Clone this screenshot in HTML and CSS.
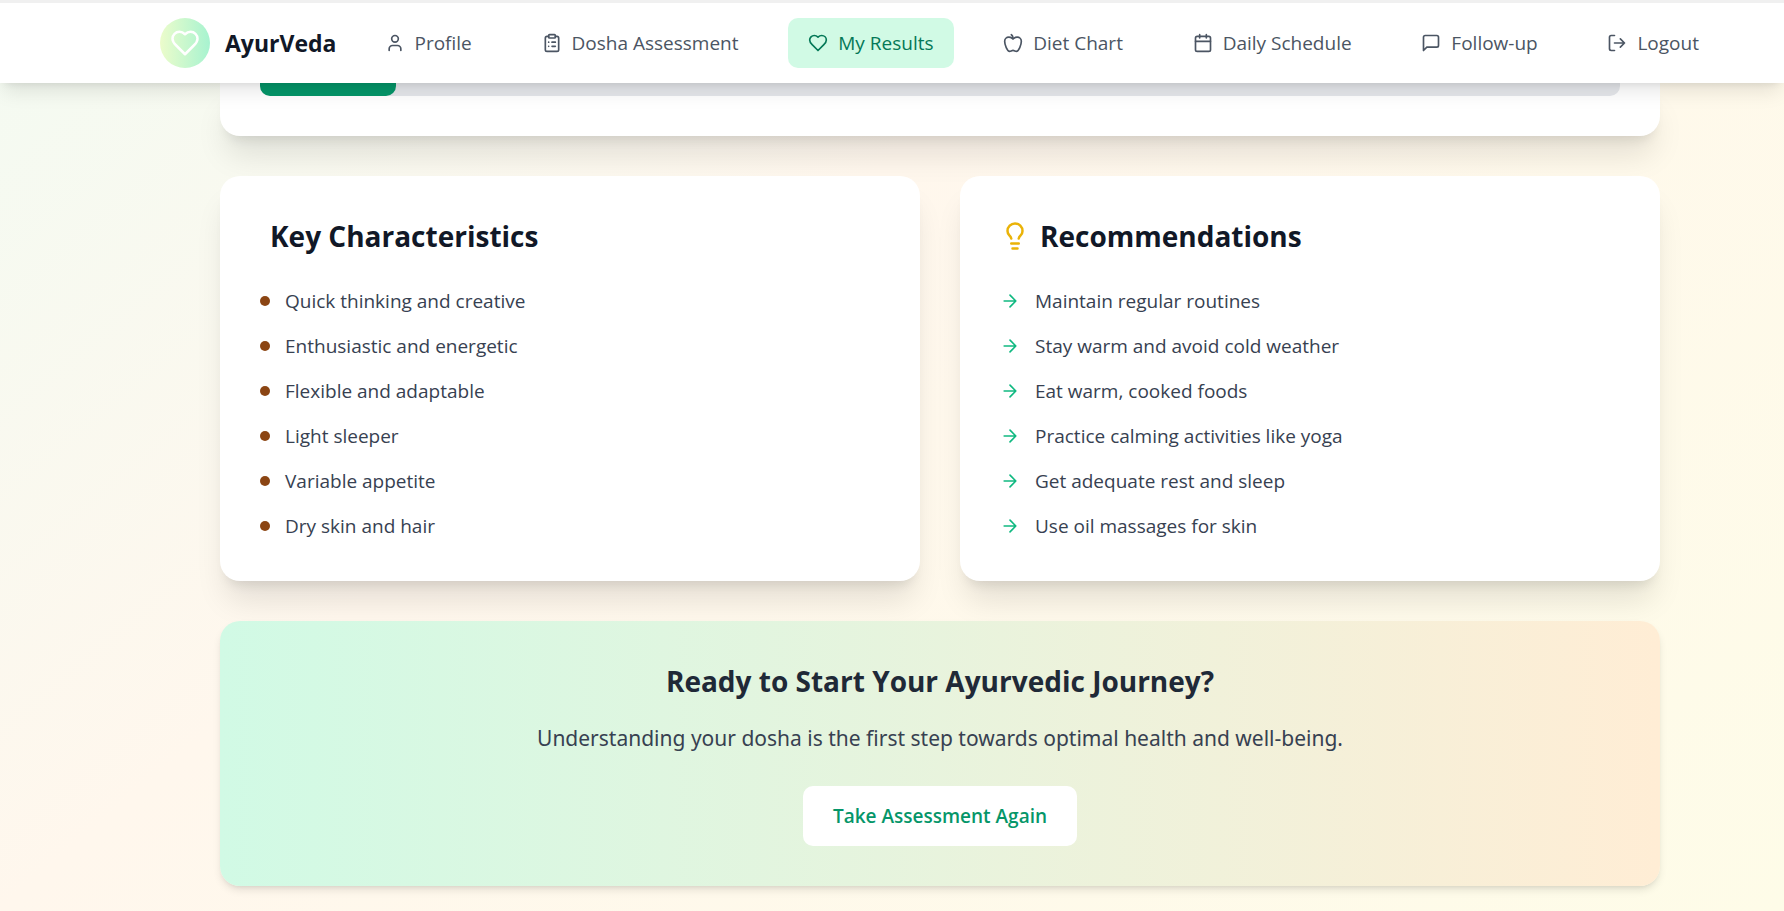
FILE: index.html
```html
<!DOCTYPE html>
<html lang="en">
<head>
<meta charset="utf-8">
<meta name="viewport" content="width=device-width, initial-scale=1">
<title>AyurVeda - My Results</title>
<link rel="stylesheet" href="styles.css">
</head>
<body>
<svg class="sprite" aria-hidden="true">
  <symbol id="heart" viewBox="0 0 24 24"><path d="M19 14c1.49-1.46 3-3.21 3-5.5A5.5 5.5 0 0 0 16.5 3c-1.76 0-3 .5-4.5 2-1.5-1.5-2.74-2-4.5-2A5.5 5.5 0 0 0 2 8.5c0 2.3 1.5 4.05 3 5.5l7 7Z"/></symbol>
  <symbol id="user" viewBox="0 0 24 24"><path d="M19 21v-2a4 4 0 0 0-4-4H9a4 4 0 0 0-4 4v2"/><circle cx="12" cy="7" r="4"/></symbol>
  <symbol id="clipboard" viewBox="0 0 24 24"><rect width="8" height="4" x="8" y="2" rx="1"/><path d="M16 4h2a2 2 0 0 1 2 2v14a2 2 0 0 1-2 2H6a2 2 0 0 1-2-2V6a2 2 0 0 1 2-2h2M12 11h4M12 16h4M8 11h.01M8 16h.01"/></symbol>
  <symbol id="apple" viewBox="0 0 24 24"><path d="M12 20.94c1.5 0 2.75 1.06 4 1.06 3 0 6-8 6-12.22A4.91 4.91 0 0 0 17 5c-2.22 0-4 1.44-5 2-1-.56-2.78-2-5-2a4.9 4.9 0 0 0-5 4.78C2 14 5 22 8 22c1.25 0 2.5-1.06 4-1.06Z"/><path d="M10 2c1 .5 2 2 2 5"/></symbol>
  <symbol id="calendar" viewBox="0 0 24 24"><path d="M8 2v4M16 2v4M3 10h18"/><rect width="18" height="18" x="3" y="4" rx="2"/></symbol>
  <symbol id="message" viewBox="0 0 24 24"><path d="M21 15a2 2 0 0 1-2 2H7l-4 4V5a2 2 0 0 1 2-2h14a2 2 0 0 1 2 2z"/></symbol>
  <symbol id="logout" viewBox="0 0 24 24"><path d="M9 21H5a2 2 0 0 1-2-2V5a2 2 0 0 1 2-2h4M16 17l5-5-5-5M21 12H9"/></symbol>
  <symbol id="bulb" viewBox="0 0 24 24"><path d="M15 14c.2-1 .7-1.7 1.5-2.5 1-.9 1.5-2.2 1.5-3.5A6 6 0 0 0 6 8c0 1 .2 2.2 1.5 3.5.7.7 1.3 1.5 1.5 2.5M9 18h6M10 22h4"/></symbol>
  <symbol id="arrow" viewBox="0 0 24 24"><path d="M5 12h14M12 5l7 7-7 7"/></symbol>
</svg>

<header class="topbar">
  <a class="brand" href="#">
    <span class="brand-mark"><svg class="icon icon-lg"><use href="#heart"/></svg></span>
    <span class="brand-name">AyurVeda</span>
  </a>
  <nav class="nav">
    <a class="nav-link" href="#"><svg class="icon"><use href="#user"/></svg>Profile</a>
    <a class="nav-link" href="#"><svg class="icon"><use href="#clipboard"/></svg>Dosha Assessment</a>
    <a class="nav-link is-active" href="#" aria-current="page"><svg class="icon"><use href="#heart"/></svg>My Results</a>
    <a class="nav-link" href="#"><svg class="icon"><use href="#apple"/></svg>Diet Chart</a>
    <a class="nav-link" href="#"><svg class="icon"><use href="#calendar"/></svg>Daily Schedule</a>
    <a class="nav-link" href="#"><svg class="icon"><use href="#message"/></svg>Follow-up</a>
    <button class="nav-link" type="button"><svg class="icon"><use href="#logout"/></svg>Logout</button>
  </nav>
</header>

<main class="page">
  <section class="card scores">
    <div class="meter" role="progressbar" aria-label="Dosha score" aria-valuenow="10" aria-valuemin="0" aria-valuemax="100">
      <div class="meter-fill" style="width: 10%"></div>
    </div>
  </section>

  <div class="columns">
    <section class="card">
      <h2 class="card-title"><span class="title-mark"></span>Key Characteristics</h2>
      <ul class="list">
        <li class="item"><span class="dot"></span>Quick thinking and creative</li>
        <li class="item"><span class="dot"></span>Enthusiastic and energetic</li>
        <li class="item"><span class="dot"></span>Flexible and adaptable</li>
        <li class="item"><span class="dot"></span>Light sleeper</li>
        <li class="item"><span class="dot"></span>Variable appetite</li>
        <li class="item"><span class="dot"></span>Dry skin and hair</li>
      </ul>
    </section>
    <section class="card">
      <h2 class="card-title"><svg class="icon icon-lg bulb"><use href="#bulb"/></svg>Recommendations</h2>
      <ul class="list">
        <li class="item"><svg class="icon arrow"><use href="#arrow"/></svg>Maintain regular routines</li>
        <li class="item"><svg class="icon arrow"><use href="#arrow"/></svg>Stay warm and avoid cold weather</li>
        <li class="item"><svg class="icon arrow"><use href="#arrow"/></svg>Eat warm, cooked foods</li>
        <li class="item"><svg class="icon arrow"><use href="#arrow"/></svg>Practice calming activities like yoga</li>
        <li class="item"><svg class="icon arrow"><use href="#arrow"/></svg>Get adequate rest and sleep</li>
        <li class="item"><svg class="icon arrow"><use href="#arrow"/></svg>Use oil massages for skin</li>
      </ul>
    </section>
  </div>

  <section class="cta">
    <h2 class="cta-title">Ready to Start Your Ayurvedic Journey?</h2>
    <p class="cta-text">Understanding your dosha is the first step towards optimal health and well-being.</p>
    <button class="cta-button" type="button">Take Assessment Again</button>
  </section>
</main>
</body>
</html>
```
FILE: styles.css
```css
*, *::before, *::after { box-sizing: border-box; }

body {
  margin: 0;
  min-height: 100vh;
  background: #fefce8 linear-gradient(to bottom right, #ecfdf5, #fff7ed 50%, #fefce8) center bottom / 100% 1500px no-repeat;
  color: #374151;
  font-family: "Segoe UI", "Open Sans", "Noto Sans", sans-serif;
  font-size: 19px;
  line-height: 30px;
}

h2, p, ul { margin: 0; padding: 0; }
ul { list-style: none; }
a { color: inherit; text-decoration: none; }
button { border: 0; background: none; font: inherit; color: inherit; cursor: pointer; }

.sprite { display: none; }

.icon {
  flex: none;
  width: 20px;
  height: 20px;
  fill: none;
  stroke: currentColor;
  stroke-width: 2;
  stroke-linecap: round;
  stroke-linejoin: round;
}
.icon-lg { width: 30px; height: 30px; }

.topbar {
  position: relative;
  z-index: 1;
  display: flex;
  align-items: center;
  gap: 28px;
  padding: 15px 65px 15px 160px;
  border-top: 3px solid #f0f0f0;
  background: #fff;
  box-shadow: 0 12px 19px -4px rgba(0, 0, 0, .1), 0 5px 8px -5px rgba(0, 0, 0, .1);
}

.brand { display: flex; align-items: center; gap: 15px; }
.brand-mark {
  display: grid;
  place-items: center;
  width: 50px;
  height: 50px;
  border-radius: 50%;
  background: linear-gradient(to right, #ecfccb, #a7f3d0);
  color: #fff;
}
.brand-name { color: #111827; font-size: 23px; font-weight: 700; }

.nav { flex: 1; display: flex; justify-content: space-between; }
.nav-link {
  display: flex;
  align-items: center;
  gap: 10px;
  padding: 10px 20px;
  border-radius: 10px;
  color: #4b5563;
  white-space: nowrap;
}
.nav-link.is-active { background: #d1fae5; color: #047857; }

.page {
  display: grid;
  gap: 40px;
  padding: 0 124px 25px 220px;
}

.card {
  padding: 40px;
  border-radius: 20px;
  background: #fff;
  box-shadow: 0 25px 31px -6px rgba(0, 0, 0, .1), 0 10px 12px -7px rgba(0, 0, 0, .1);
}
.scores { padding-top: 0; border-radius: 0 0 20px 20px; }

.meter { border-radius: 0 0 10px 10px; background: #e5e7eb; }
.meter-fill { height: 13px; border-radius: 0 0 10px 10px; background: #059669; }

.columns { display: grid; grid-template-columns: 1fr 1fr; gap: 40px; }

.card-title {
  display: flex;
  align-items: center;
  gap: 10px;
  margin-bottom: 30px;
  color: #111827;
  font-size: 28px;
  font-weight: 700;
  line-height: 40px;
}
.bulb { color: #eab308; }

.list { display: grid; gap: 15px; }
.item { display: flex; align-items: center; gap: 15px; }
.dot { width: 10px; height: 10px; border-radius: 50%; background: #8b4513; }
.arrow { color: #10b981; }

.cta {
  padding: 40px;
  border-radius: 20px;
  background: linear-gradient(to right, #d1fae5, #ffedd5);
  box-shadow: 0 5px 8px -1px rgba(0, 0, 0, .1), 0 3px 5px -3px rgba(0, 0, 0, .1);
  text-align: center;
}
.cta-title { margin-bottom: 20px; color: #1f2937; font-size: 28px; font-weight: 700; line-height: 40px; }
.cta-text { margin-bottom: 30px; font-family: "Segoe UI", "Noto Sans", sans-serif; font-size: 21px; line-height: 35px; }
.cta-button {
  padding: 15px 30px;
  border-radius: 10px;
  background: #fff;
  color: #059669;
  font-weight: 600;
}
```
